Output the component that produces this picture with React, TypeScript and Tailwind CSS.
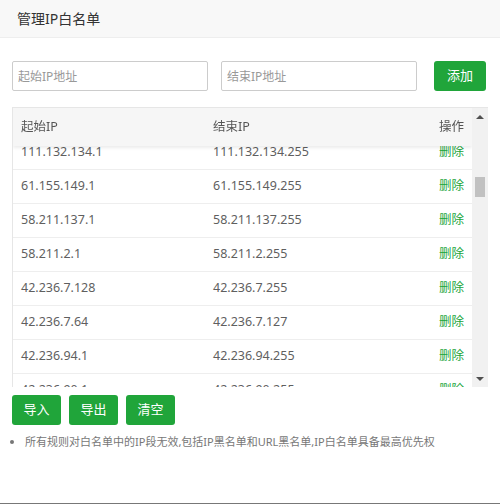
import { useEffect, useRef } from 'react';

interface Range {
  start: string;
  end: string;
}

const visible: Range[] = [
  { start: '111.132.134.1', end: '111.132.134.255' },
  { start: '61.155.149.1', end: '61.155.149.255' },
  { start: '58.211.137.1', end: '58.211.137.255' },
  { start: '58.211.2.1', end: '58.211.2.255' },
  { start: '42.236.7.128', end: '42.236.7.255' },
  { start: '42.236.7.64', end: '42.236.7.127' },
  { start: '42.236.94.1', end: '42.236.94.255' },
  { start: '42.236.90.1', end: '42.236.90.255' },
];

// rows above and below the visible slice
const before: Range[] = Array.from({ length: 21 }, (_, i) => ({
  start: `112.${90 + i}.16.1`,
  end: `112.${90 + i}.16.255`,
}));
const after: Range[] = Array.from({ length: 71 }, (_, i) => ({
  start: `36.${100 + i}.2.1`,
  end: `36.${100 + i}.2.255`,
}));
const rows = [...before, ...visible, ...after];

const font = { fontFamily: '"Noto Sans", "Noto Sans CJK SC", sans-serif' };

export default function App() {
  const boxRef = useRef<HTMLDivElement>(null);

  useEffect(() => {
    if (boxRef.current) boxRef.current.scrollTop = before.length * 34 + 11;
  }, []);

  return (
    <div className="w-[500px] h-[504px] bg-white flex flex-col border-b border-[#777]" style={font}>
      <div className="h-[38px] bg-[#f8f8f8] border-b border-[#eee] flex items-center pl-[17px] text-[14px] text-[#333] shrink-0">
        管理IP白名单
      </div>

      <div className="flex items-center px-3 mt-[23px] gap-[13px]">
        <input
          placeholder="起始IP地址"
          className="w-[196px] h-[30px] border border-[#ccc] rounded-[2px] px-[5px] text-[12px] placeholder:text-[#999] outline-none"
        />
        <input
          placeholder="结束IP地址"
          className="w-[196px] h-[30px] border border-[#ccc] rounded-[2px] px-[5px] text-[12px] placeholder:text-[#999] outline-none"
        />
        <button className="ml-[4px] w-[52px] h-[30px] bg-[#20a53a] rounded-[3px] text-white text-[13px]">添加</button>
      </div>

      <div className="mx-3 mt-4 h-[280px] flex border-l border-t border-[#e6e6e6] shrink-0">
        <div ref={boxRef} className="flex-1 overflow-y-scroll [scrollbar-width:none]">
          <table className="w-full table-fixed border-collapse text-[12.5px] text-[#5f5f5f]">
            <thead className="sticky top-0 z-10">
              <tr className="h-[38px] bg-[#f6f6f6] shadow-[0_2px_3px_rgba(0,0,0,0.08)]">
                <th className="text-left font-normal pl-2 w-[192px] text-[#555]">起始IP</th>
                <th className="text-left font-normal pl-2 text-[#555]">结束IP</th>
                <th className="text-right font-normal pr-2 w-[80px] text-[#555]">操作</th>
              </tr>
            </thead>
            <tbody>
              {rows.map((r, i) => (
                <tr key={i} className="h-[34px] border-b border-[#eee]">
                  <td className="pl-2">{r.start}</td>
                  <td className="pl-2">{r.end}</td>
                  <td className="text-right pr-2 text-[#20a53a]">删除</td>
                </tr>
              ))}
            </tbody>
          </table>
        </div>

        <div className="w-[16px] bg-[#f1f1f1] flex flex-col">
          <div className="h-[17px] flex items-center justify-center">
            <div className="w-0 h-0 border-l-[4px] border-r-[4px] border-b-[4px] border-l-transparent border-r-transparent border-b-[#505050]" />
          </div>
          <div className="flex-1 flex justify-center">
            <div className="mt-[52px] w-[10px] h-[20px] bg-[#c1c1c1]" />
          </div>
          <div className="h-[17px] flex items-center justify-center">
            <div className="w-0 h-0 border-l-[4px] border-r-[4px] border-t-[4px] border-l-transparent border-r-transparent border-t-[#505050]" />
          </div>
        </div>
      </div>

      <div className="flex gap-2 px-3 mt-[8px]">
        <button className="w-[49px] h-[30px] bg-[#20a53a] rounded-[3px] text-white text-[13px]">导入</button>
        <button className="w-[49px] h-[30px] bg-[#20a53a] rounded-[3px] text-white text-[13px]">导出</button>
        <button className="w-[49px] h-[30px] bg-[#20a53a] rounded-[3px] text-white text-[13px]">清空</button>
      </div>

      <ul className="mt-[9px] pl-[25px] list-disc text-[11px] text-[#777]">
        <li>所有规则对白名单中的IP段无效,包括IP黑名单和URL黑名单,IP白名单具备最高优先权</li>
      </ul>
    </div>
  );
}
